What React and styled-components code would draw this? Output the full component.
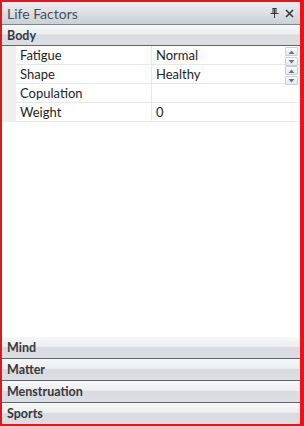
import React from "react";
import styled, { createGlobalStyle } from "styled-components";

const Global = createGlobalStyle`
  html, body { margin: 0; padding: 0; height: 100%; background: #fff; }
  #root { height: 100%; }
`;

const Frame = styled.div`
  box-sizing: border-box;
  width: 304px;
  height: 426px;
  border-style: solid;
  border-color: #e8141b;
  border-width: 2px 4px 2px 2px;
  background: #fff;
  display: flex;
  flex-direction: column;
  font-family: Lato, "Open Sans", sans-serif;
  overflow: hidden;
`;

const TitleBar = styled.div`
  height: 22px;
  flex: none;
  display: flex;
  align-items: center;
  padding: 0 6px 0 5px;
  background: linear-gradient(#eceef1, #d9dde1 60%, #cbd0d6);
  border-bottom: 1px solid #7f868e;
  color: #4b4f54;
  font-size: 14px;
`;

const Title = styled.span`
  flex: 1;
`;

const TitleButtons = styled.div`
  display: flex;
  align-items: center;
  gap: 6px;
`;

const SectionHeader = styled.div`
  height: ${(p) => p.$h || 21}px;
  flex: none;
  box-sizing: border-box;
  display: flex;
  align-items: center;
  padding-left: 5px;
  background: linear-gradient(#f6f7f8 0%, #eceef0 45%, #d8dbdf 50%, #dcdfe2 100%);
  border-bottom: ${(p) => (p.$last ? "none" : "1px solid #5e646b")};
  color: #363a3f;
  font-weight: 700;
  font-size: 12.5px;
`;

const Grid = styled.div`
  flex: none;
  display: flex;
  flex-direction: column;
`;

const Row = styled.div`
  display: grid;
  grid-template-columns: 14px 136px 1fr;
  height: 19px;
  box-sizing: border-box;
`;

const Margin = styled.div`
  background: #f0f0f0;
`;

const Cell = styled.div`
  display: flex;
  align-items: center;
  border-bottom: 1px solid #e8e8e8;
  border-right: ${(p) => (p.$name ? "1px solid #e8e8e8" : "none")};
  padding-left: 4px;
  font-size: 13px;
  color: #1e1e1e;
  position: relative;
`;

const Spin = styled.div`
  position: absolute;
  right: 2px;
  top: 1px;
  display: flex;
  flex-direction: column;
  gap: 1px;
`;

const SpinBtn = styled.div`
  width: 11px;
  height: 7px;
  border: 1px solid #c8ced5;
  border-radius: 1px;
  background: linear-gradient(#fbfcfd, #e6e9ee);
  display: flex;
  align-items: center;
  justify-content: center;
`;

const Fill = styled.div`
  flex: 1;
  background: #fff;
`;

const Arrow = ({ up }) => (
  <svg width="7" height="4" viewBox="0 0 7 4">
    <path d={up ? "M0.5 4 L3.5 0.5 L6.5 4 Z" : "M0.5 0 L3.5 3.5 L6.5 0 Z"} fill="#6a7688" />
  </svg>
);

const Spinner = () => (
  <Spin>
    <SpinBtn>
      <Arrow up />
    </SpinBtn>
    <SpinBtn>
      <Arrow />
    </SpinBtn>
  </Spin>
);

const PinIcon = () => (
  <svg width="9" height="10" viewBox="0 0 9 10">
    <path d="M2.5 0.5 H6.5 M3 0.5 V5 M6 0.5 V5 M4.5 0.5 V5 M0.5 5.5 H8.5 M4.5 5.5 V10" stroke="#33373c" strokeWidth="1" fill="none" />
  </svg>
);

const CloseIcon = () => (
  <svg width="9" height="9" viewBox="0 0 9 9">
    <path d="M1 1 L8 8 M8 1 L1 8" stroke="#33373c" strokeWidth="1.6" />
  </svg>
);

const rows = [
  { name: "Fatigue", value: "Normal", spin: true },
  { name: "Shape", value: "Healthy", spin: true },
  { name: "Copulation", value: "" },
  { name: "Weight", value: "0" },
];

export default function App() {
  return (
    <>
      <Global />
      <Frame>
        <TitleBar>
          <Title>Life Factors</Title>
          <TitleButtons>
            <PinIcon />
            <CloseIcon />
          </TitleButtons>
        </TitleBar>
        <SectionHeader $h={21}>Body</SectionHeader>
        <Grid>
          {rows.map((r) => (
            <Row key={r.name}>
              <Margin />
              <Cell $name>{r.name}</Cell>
              <Cell>
                {r.value}
                {r.spin && <Spinner />}
              </Cell>
            </Row>
          ))}
        </Grid>
        <Fill />
        <SectionHeader $h={22}>Mind</SectionHeader>
        <SectionHeader $h={22}>Matter</SectionHeader>
        <SectionHeader $h={22}>Menstruation</SectionHeader>
        <SectionHeader $h={21} $last>Sports</SectionHeader>
      </Frame>
    </>
  );
}
